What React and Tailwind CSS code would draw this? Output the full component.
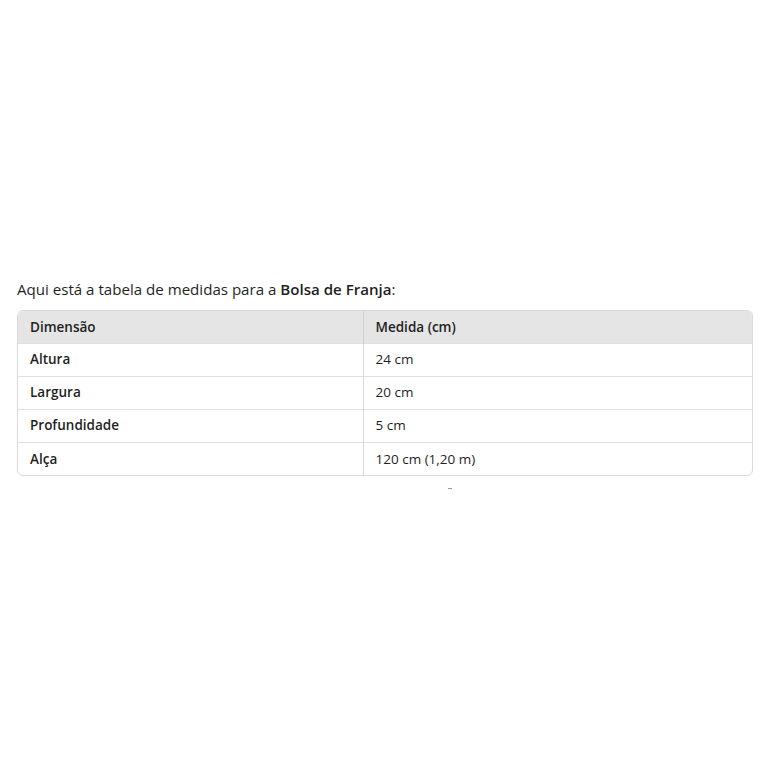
const rows = [
  ["Altura", "24 cm"],
  ["Largura", "20 cm"],
  ["Profundidade", "5 cm"],
  ["Alça", "120 cm (1,20 m)"],
];

export default function App() {
  return (
    <div
      className="h-[766px] w-[766px] bg-white px-[17px] pt-[278px] text-[#1f1f1f]"
      style={{ fontFamily: '"Open Sans", "Noto Sans", sans-serif' }}
    >
      <p className="text-[15.1px] leading-[22px]">
        Aqui está a tabela de medidas para a <strong className="font-semibold">Bolsa de Franja</strong>:
      </p>

      <div className="mt-[10px] w-[736px] overflow-hidden rounded-[6px] border border-[#d9d9d9]">
        <table className="w-full border-collapse text-[13.5px]">
          <thead>
            <tr className="h-[32px] bg-[#e5e5e5]">
              <th className="w-[345px] border-r border-[#d0d0d0] pl-[12px] text-left font-semibold">Dimensão</th>
              <th className="pl-[12px] text-left font-semibold">Medida (cm)</th>
            </tr>
          </thead>
          <tbody>
            {rows.map(([name, value]) => (
              <tr key={name} className="h-[33px] border-t border-[#e0e0e0]">
                <td className="border-r border-[#d9d9d9] pl-[12px] font-semibold">{name}</td>
                <td className="pl-[12px]">{value}</td>
              </tr>
            ))}
          </tbody>
        </table>
      </div>

      <div className="ml-[431px] mt-[12px] h-[1px] w-[4px] bg-[#9a9a9a]" />
    </div>
  );
}
